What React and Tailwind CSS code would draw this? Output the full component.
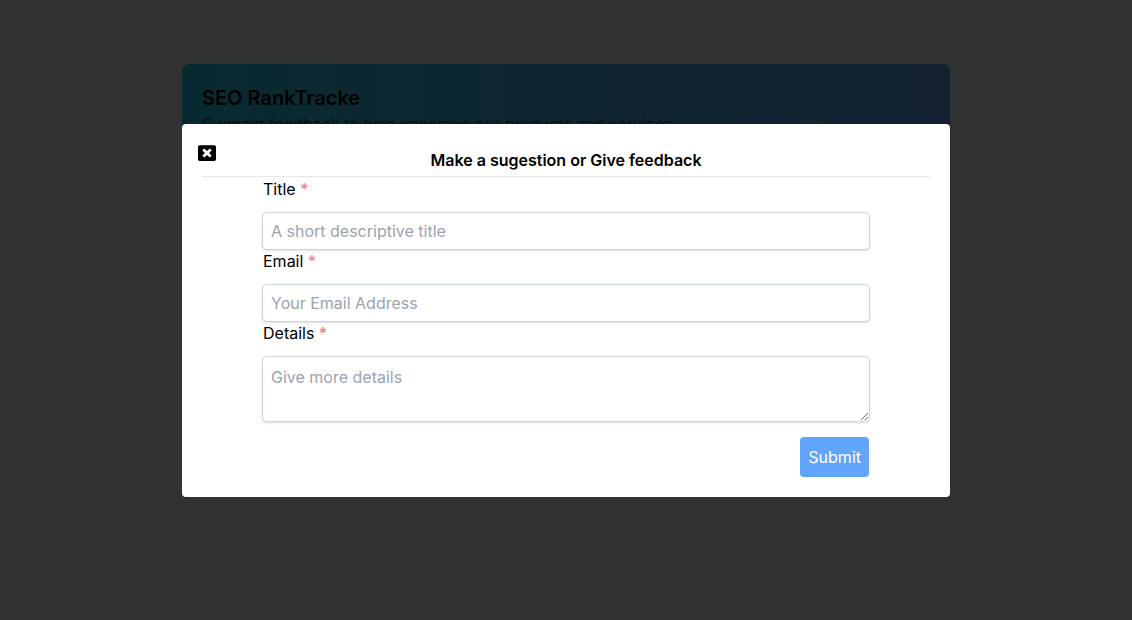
import { FaWindowClose } from "react-icons/fa";

const fieldClass =
  "block w-full rounded-[5px] border border-[#cbd5e1] bg-white p-2 leading-6 shadow-sm outline-none placeholder:text-[#9ca3af]";

function Field({ id, label, children }) {
  return (
    <div>
      <label htmlFor={id} className="mb-3 block pl-px leading-[22px]">
        {label} <span className="text-[#f87171]">*</span>
      </label>
      {children}
    </div>
  );
}

function FeedbackDialog() {
  return (
    <div className="fixed inset-0 flex items-center justify-center bg-black/80">
      <section
        role="dialog"
        aria-labelledby="dialog-title"
        className="relative w-full max-w-3xl rounded bg-white p-5"
      >
        <button type="button" aria-label="Close" className="absolute top-5 left-4 text-lg leading-none">
          <FaWindowClose />
        </button>
        <h2
          id="dialog-title"
          className="border-b border-gray-200 pt-1 pb-1 text-center leading-6 font-semibold"
        >
          Make a sugestion or Give feedback
        </h2>
        <form className="px-15 pt-px" onSubmit={(e) => e.preventDefault()}>
          <Field id="title" label="Title">
            <input id="title" type="text" placeholder="A short descriptive title" className={`${fieldClass} h-[38px]`} />
          </Field>
          <Field id="email" label="Email">
            <input id="email" type="email" placeholder="Your Email Address" className={`${fieldClass} h-[38px]`} />
          </Field>
          <Field id="details" label="Details">
            <textarea id="details" rows={2} placeholder="Give more details" className={`${fieldClass} resize`} />
          </Field>
          <div className="mt-[15px] flex justify-end pr-px">
            <button type="submit" className="rounded bg-[#60a5fa] p-2 leading-6 text-white">
              Submit
            </button>
          </div>
        </form>
      </section>
    </div>
  );
}

export default function App() {
  return (
    <div className="min-h-screen bg-[#f1f5f9] px-4 py-16 font-['Inter',sans-serif] text-base text-black">
      <header className="mx-auto max-w-3xl rounded-lg bg-linear-to-r from-[#22d3ee] to-[#60a5fa] p-5">
        <h1 className="text-xl font-semibold">SEO RankTracke</h1>
        <p className="text-gray-700">Suggest feedback to help imporove our products and services</p>
      </header>
      <FeedbackDialog />
    </div>
  );
}
